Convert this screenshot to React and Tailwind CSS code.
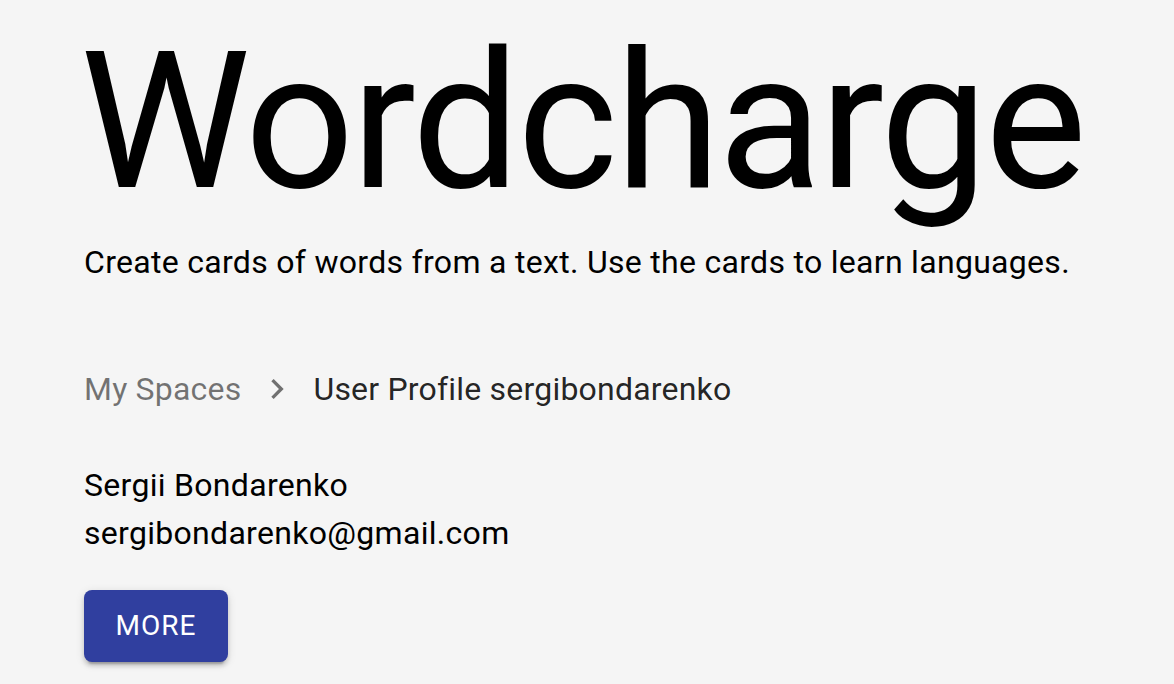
export default function App() {
  return (
    <div className="min-h-screen bg-[#f5f5f5] text-black font-['Roboto',sans-serif] overflow-hidden">
      <main className="px-[84px] pt-[10px]">
        {/* Header */}
        <h1 className="text-[192px] leading-[224px] font-normal tracking-[-2.8px] ml-[-4px]">Wordcharge</h1>
        <p className="text-[32px] leading-[48px] mt-[4px] tracking-[0.3px]">
          Create cards of words from a text. Use the cards to learn languages.
        </p>

        {/* Breadcrumbs */}
        <nav className="mt-[79px] flex items-center text-[32px] leading-[48px] tracking-[0.2px]">
          <span className="text-[rgba(0,0,0,0.54)]">My Spaces</span>
          <svg viewBox="0 0 24 24" className="w-[40px] h-[40px] mx-[16px] fill-[rgba(0,0,0,0.54)]">
            <path d="M10 6 8.59 7.41 13.17 12l-4.58 4.59L10 18l6-6z" />
          </svg>
          <span className="text-[rgba(0,0,0,0.87)]">User Profile sergibondarenko</span>
        </nav>

        {/* Profile */}
        <div className="mt-[48px] text-[32px] leading-[48px] tracking-[0.3px]">
          <p>Sergii Bondarenko</p>
          <p>sergibondarenko@gmail.com</p>
        </div>

        <button className="mt-[33px] h-[72px] w-[144px] rounded-[8px] bg-[#303f9f] text-white text-[28px] font-normal tracking-[1px] uppercase shadow-[0_6px_2px_-4px_rgba(0,0,0,0.2),0_4px_4px_0_rgba(0,0,0,0.14),0_2px_10px_0_rgba(0,0,0,0.12)]">
          More
        </button>
      </main>
    </div>
  )
}
